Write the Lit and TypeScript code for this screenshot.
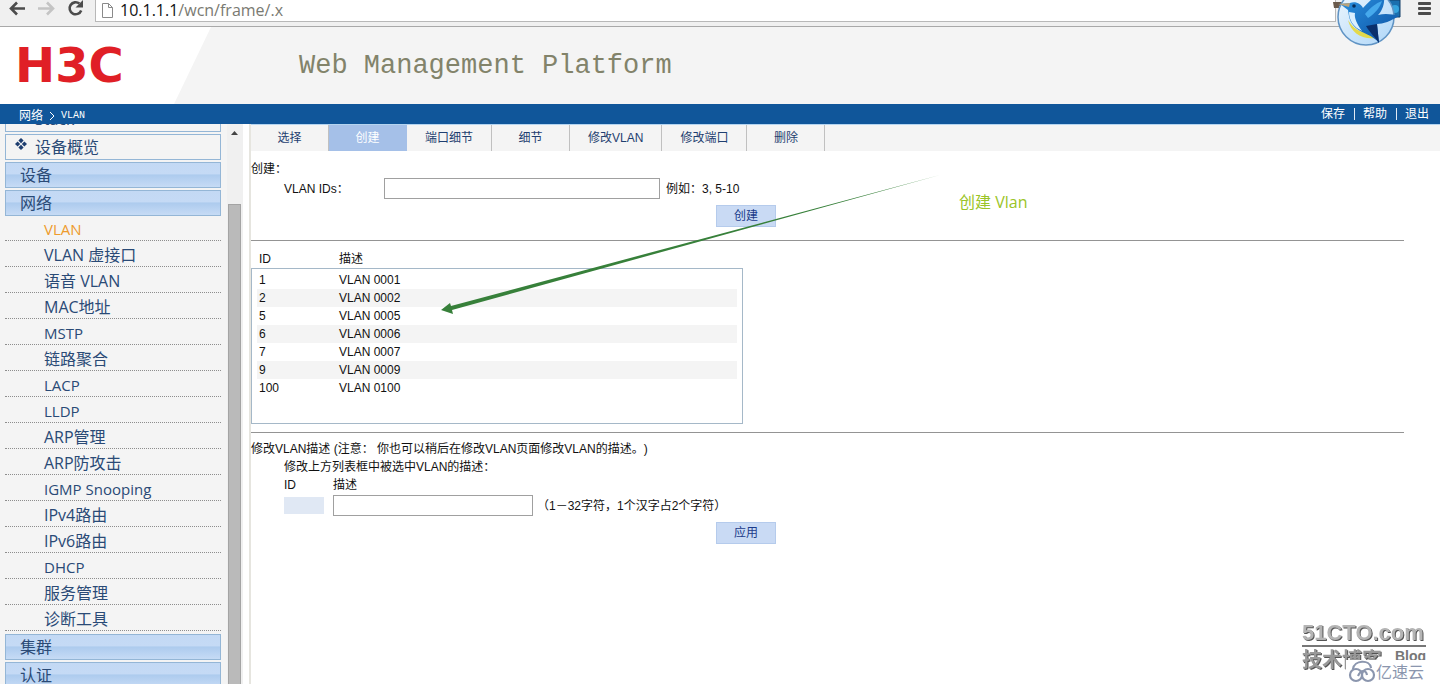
import { LitElement, html, css, svg } from "lit";
import { customElement, property, state } from "lit/decorators.js";
import { classMap } from "lit/directives/class-map.js";

@customElement("browser-bar")
class BrowserBar extends LitElement {
  static styles = css`
    :host {
      display: flex;
      align-items: flex-start;
      height: 26px;
      border-bottom: 1px solid #a9a9a9;
      background: #f0f0f0;
      overflow: hidden;
    }
    .tools {
      display: flex;
      flex: none;
      gap: 10px;
      width: 95px;
      padding-left: 8px;
      box-sizing: border-box;
    }
    .tool {
      display: block;
      padding: 0;
      border: 0;
      background: none;
      height: 20px;
      width: 19px;
    }
    svg {
      display: block;
    }
    .address {
      flex: 1;
      display: flex;
      gap: 6px;
      align-items: center;
      height: 22px;
      padding-left: 5px;
      border: 1px solid #b8b8b8;
      border-top: 0;
      background: #fff;
      font: 16px/18px "Open Sans", "Noto Sans", sans-serif;
      color: #7a7a72;
      box-sizing: border-box;
    }
    .url {
      height: 20px;
    }
    .host {
      color: #111;
    }
    .right {
      width: 104px;
      display: flex;
      justify-content: flex-end;
      padding-right: 8px;
      box-sizing: border-box;
    }
  `;
  render() {
    return html`
      <div class="tools">
        <button class="tool" aria-label="后退">
          <svg width="19" height="20" viewBox="0 0 19 20" fill="none" stroke="#4c4c4c" stroke-width="2.6">
            <path d="M17 8.500H4M9 2.500L3 8.500l6 6" />
          </svg>
        </button>
        <button class="tool" aria-label="前进">
          <svg width="19" height="20" viewBox="0 0 19 20" fill="none" stroke="#c4c4c4" stroke-width="2.6">
            <path d="M1 8.500h14M10 2.500l6 6l-6 6" />
          </svg>
        </button>
        <button class="tool" aria-label="刷新">
          <svg width="19" height="20" viewBox="0 0 19 20">
            <path d="M13.4 3.6A6 6 0 1 0 15.2 10.500" fill="none" stroke="#4c4c4c" stroke-width="2.6" />
            <path d="M17 0v7.500h-7.500z" fill="#4c4c4c" />
          </svg>
        </button>
      </div>
      <div class="address">
        <svg width="13" height="18" viewBox="0 0 13 18" fill="#fff" stroke="#8a8a8a">
          <path d="M1.500 1.500h6l4 4v10h-10zM7.500 1.500v4h4" />
        </svg>
        <span class="url"><span class="host">10.1.1.1</span>/wcn/frame/.x</span>
      </div>
      <div class="right">
        <button class="tool" aria-label="菜单">
          <svg width="19" height="20" viewBox="0 0 19 20" fill="#4a4a4a">
            <rect x="5" y="2" width="13" height="3" rx="1" />
            <rect x="5" y="7" width="13" height="3" rx="1" />
            <rect x="5" y="12" width="13" height="3" rx="1" />
          </svg>
        </button>
      </div>
    `;
  }
}

@customElement("side-menu")
class SideMenu extends LitElement {
  static styles = css`
    :host {
      display: flex;
      width: 243px;
      flex: none;
      background: #f4f4f4;
      overflow: hidden;
      font: 16px/24px "Open Sans", "Noto Sans CJK SC", sans-serif;
    }
    nav {
      flex: 1;
      margin-top: -18px;
      padding: 0 6px 0 5px;
    }
    a {
      color: #2a4a76;
      text-decoration: none;
    }
    .box {
      display: flex;
      align-items: center;
      height: 26px;
      margin-bottom: 2px;
      padding-left: 14px;
      border: 1px solid #94b6d6;
      box-sizing: border-box;
    }
    .group {
      background: linear-gradient(#c3d9f4, #c5daf5 45%, #adcbee 50%, #c6dbf5);
    }
    .page {
      padding-left: 9px;
      gap: 8px;
    }
    ul {
      list-style: none;
      margin: -3px 0 3px;
      padding: 0;
    }
    li {
      height: 26px;
      padding: 2px 0 0 39px;
      border-bottom: 1px dotted #8d8d8d;
      box-sizing: border-box;
    }
    .latin {
      font-size: 15px;
    }
    .current {
      color: #ee9b2d;
    }
    .scroll {
      width: 16px;
      background: #f0f0f0;
      display: flex;
      flex-direction: column;
      padding: 0 2px 0 1px;
      box-sizing: border-box;
    }
    .up {
      height: 80px;
      padding-top: 6px;
      box-sizing: border-box;
    }
    .thumb {
      flex: 1;
      background: #bababa;
      border: 1px solid #a4a4a4;
      border-bottom: 0;
    }
    svg {
      display: block;
    }
  `;
  items = ["VLAN", "VLAN 虚接口", "语音 VLAN", "MAC地址", "MSTP", "链路聚合", "LACP", "LLDP", "ARP管理",
    "ARP防攻击", "IGMP Snooping", "IPv4路由", "IPv6路由", "DHCP", "服务管理", "诊断工具"];

  page(label: string) {
    return html`<a class="box page" href="#">
      <svg width="12" height="18" viewBox="0 0 12 18" fill="#1f3f70">
        <path d="M6 0l2.600 2.600L6 5.200L3.400 2.600zM6 6.800l2.600 2.600L6 12L3.400 9.400zM2.600 3.400L5.200 6L2.600 8.600L0 6zM9.400 3.400L12 6L9.400 8.600L6.800 6z" />
      </svg>
      <span>${label}</span>
    </a>`;
  }
  item(label: string, i: number) {
    const classes = { current: i === 0, latin: /^[A-Za-z ]+$/.test(label) };
    return html`<li><a class=${classMap(classes)} href="#">${label}</a></li>`;
  }
  render() {
    return html`
      <nav>
        ${this.page("Stack")} ${this.page("设备概览")}
        <a class="box group" href="#">设备</a>
        <a class="box group" href="#">网络</a>
        <ul>
          ${this.items.map((t, i) => this.item(t, i))}
        </ul>
        <a class="box group" href="#">集群</a>
        <a class="box group" href="#">认证</a>
      </nav>
      <div class="scroll">
        <div class="up">
          <svg width="13" height="6" viewBox="0 0 13 6"><path d="M3 5L6.500 1L10 5z" fill="#444" /></svg>
        </div>
        <div class="thumb"></div>
      </div>
    `;
  }
}

@customElement("vlan-form")
class VlanForm extends LitElement {
  static styles = css`
    :host {
      display: block;
      flex: 1;
      min-width: 0;
      margin-left: 6px;
      border-left: 2px solid #e6e5df;
      background: #fff;
      color: #111;
      font: 12px/18px "Liberation Sans", "Noto Sans CJK SC", sans-serif;
      text-spacing-trim: space-all;
    }
    .tabs {
      display: flex;
      height: 27px;
      border-top: 1px solid #b4d4f0;
      background: #f4f4f4;
      box-sizing: border-box;
    }
    .tab {
      min-width: 78px;
      padding: 0 18px;
      border: 0;
      border-right: 1px solid #c0c0c0;
      background: none;
      color: #1f3f70;
      font: inherit;
      box-sizing: border-box;
    }
    .tab.active {
      background: #a5c0e8;
      border-color: #a5c0e8;
      color: #fff;
    }
    .body {
      padding-top: 9px;
      padding-right: 36px;
    }
    .row {
      display: flex;
      align-items: center;
      padding-left: 33px;
    }
    .name {
      width: 100px;
    }
    input {
      height: 21px;
      border: 1px solid #a0a0a0;
      padding: 0 4px;
      background: #fff;
      font: inherit;
      box-sizing: border-box;
    }
    .ids {
      width: 276px;
      margin-right: 6px;
    }
    .actions {
      display: flex;
      padding: 6px 0 0 465px;
    }
    .action {
      width: 60px;
      height: 22px;
      padding: 0;
      border: 1px solid #b5cbec;
      background: #c9daf4;
      color: #1b3a8a;
      font: inherit;
    }
    hr {
      height: 1px;
      margin: 13px 0 0;
      border: 0;
      background: #949494;
    }
    table {
      display: block;
      width: 492px;
      padding-top: 9px;
    }
    thead,
    tbody {
      display: block;
    }
    tr {
      display: grid;
      grid-template-columns: 80px 1fr;
    }
    th,
    td {
      padding: 0;
      text-align: left;
      font-weight: 400;
    }
    thead {
      padding: 0 8px;
    }
    tbody {
      height: 156px;
      padding: 2px 5px;
      border: 1px solid #a5b8c8;
      box-sizing: border-box;
    }
    tbody tr {
      padding-left: 2px;
    }
    tbody tr:nth-child(even) {
      background: #f4f4f4;
    }
    .list-end {
      margin-top: 8px;
      margin-bottom: 7px;
    }
    .col-id {
      width: 49px;
    }
    .fields {
      margin-top: 1px;
    }
    .picked {
      width: 40px;
      height: 17px;
      border: 0;
      margin-right: 9px;
      background: #e0e8f4;
    }
    .desc {
      width: 200px;
      margin-right: 4px;
    }
  `;
  @state() active = 1;
  tabs = ["选择", "创建", "端口细节", "细节", "修改VLAN", "修改端口", "删除"];
  @property({ attribute: false }) vlans = [
    ["1", "VLAN 0001"],
    ["2", "VLAN 0002"],
    ["5", "VLAN 0005"],
    ["6", "VLAN 0006"],
    ["7", "VLAN 0007"],
    ["9", "VLAN 0009"],
    ["100", "VLAN 0100"],
  ];
  render() {
    return html`
      <div class="tabs">
        ${this.tabs.map(
          (t, i) =>
            html`<button class=${classMap({ tab: true, active: i === this.active })} @click=${() => (this.active = i)}>${t}</button>`
        )}
      </div>
      <div class="body">
        <div>创建：</div>
        <div class="row">
          <label class="name" for="ids">VLAN IDs：</label>
          <input class="ids" id="ids" type="text" />
          <span>例如：3, 5-10</span>
        </div>
        <div class="actions"><button class="action">创建</button></div>
        <hr />
        <table>
          <thead><tr><th>ID</th><th>描述</th></tr></thead>
          <tbody>${this.vlans.map(([id, name]) => html`<tr><td>${id}</td><td>${name}</td></tr>`)}</tbody>
        </table>
        <hr class="list-end" />
        <div>修改VLAN描述 (注意： 你也可以稍后在修改VLAN页面修改VLAN的描述。)</div>
        <div class="row">修改上方列表框中被选中VLAN的描述：</div>
        <div class="row">
          <label class="col-id" for="picked">ID</label>
          <label for="desc">描述</label>
        </div>
        <div class="row fields">
          <input class="picked" id="picked" type="text" readonly />
          <input class="desc" id="desc" type="text" />
          <span>（1－32字符，1个汉字占2个字符）</span>
        </div>
        <div class="actions"><button class="action">应用</button></div>
      </div>
    `;
  }
}

@customElement("app-root")
class AppRoot extends LitElement {
  static styles = css`
    :host {
      display: flex;
      flex-direction: column;
      position: relative;
      height: 100vh;
      overflow: hidden;
      background: #fff;
    }
    header {
      display: flex;
      align-items: center;
      flex: none;
      height: 77px;
      background: #f4f4f4;
    }
    .brand {
      width: 211px;
      height: 77px;
      margin-right: 88px;
      padding-left: 15px;
      box-sizing: border-box;
      background: #fff;
      clip-path: polygon(0 0, 100% 0, 174px 100%, 0 100%);
      color: #e01f26;
      font: bold 48px/77px "DejaVu Sans", sans-serif;
    }
    h1 {
      margin: 0;
      color: #82836a;
      font: 27px/32px "Liberation Mono", monospace;
    }
    .crumbs {
      display: flex;
      align-items: center;
      justify-content: space-between;
      flex: none;
      height: 20px;
      padding: 0 11px 0 19px;
      background: #10569a;
      color: #fff;
      font: 12px/20px "Liberation Sans", "Noto Sans CJK SC", sans-serif;
    }
    .path,
    .links {
      display: flex;
      align-items: center;
      gap: 6px;
    }
    .path {
      padding-top: 3px;
    }
    .links {
      gap: 8px;
    }
    .crumbs a {
      color: #fff;
      text-decoration: none;
    }
    .mono {
      font: 10px/20px "Liberation Mono", monospace;
    }
    .sep {
      width: 1px;
      height: 12px;
      margin-left: 1px;
      background: #dfe9f4;
    }
    .main {
      display: flex;
      flex: 1;
      min-height: 0;
    }
    .bird,
    .arrow,
    .note,
    .mark {
      position: absolute;
      pointer-events: none;
    }
    .bird {
      top: 0;
      right: 36px;
    }
    .arrow {
      left: 438px;
      top: 172px;
    }
    .note {
      left: 959px;
      top: 190px;
      color: #9ac427;
      font: 16px/24px "Open Sans", "Noto Sans CJK SC", sans-serif;
    }
    .mark {
      right: 10px;
      bottom: 0;
    }
    .raised {
      filter: drop-shadow(1px 1px 0 #555);
    }
    .cto {
      font: bold 22px "Liberation Sans", sans-serif;
    }
    .sub {
      font: bold 20px "Noto Sans CJK SC", sans-serif;
    }
    .blog {
      font: bold 14px "Liberation Sans", sans-serif;
    }
    .cloud {
      font: 16px "Noto Sans CJK SC", sans-serif;
    }
  `;

  bird() {
    return svg`<svg class="bird" width="72" height="50" viewBox="0 0 72 50">
      <defs>
        <linearGradient id="disc" x1="0" y1="0" x2="1" y2="1">
          <stop offset="0" stop-color="#eef7fe" /><stop offset="1" stop-color="#aed6f8" />
        </linearGradient>
        <linearGradient id="wing" x1="0" y1="0" x2="1" y2="1">
          <stop offset="0" stop-color="#2b93e2" /><stop offset="1" stop-color="#0b4fa0" />
        </linearGradient>
      </defs>
      <path d="M48 0h20v17h-10z" fill="#1b6fae" stroke="#123f68" />
      <circle cx="63" cy="9" r="4" fill="#35a3dd" />
      <path d="M1 2h13v4H7v2H2z" fill="#6a5a4c" />
      <circle cx="34" cy="17" r="28" fill="url(#disc)" stroke="#5f93c4" stroke-width="1.500" />
      <path d="M16 20C19 33 30 40 44 38L37 33C28 33 21 28 16 20z" fill="#e3d94b" />
      <path d="M8 4L18 3C24 1 29 4 31 8C35 4 40 -2 45 -4H52C53 4 50 11 46 15C53 13 60 14 67 16C59 21 51 24 45 24L47 43C41 35 31 34 24 28C17 22 17 16 16 10z" fill="url(#wing)" />
      <path d="M6 4L18 3L17 7z" fill="#b9a37b" />
      <path d="M34 26L45 24L47 43C43 37 38 33 34 26z" fill="#0a2f6b" />
      <path d="M17 12C17 20 21 27 30 31C25 24 22 18 23 13z" fill="#d9efff" />
      <path d="M33 14C38 8 44 3 50 1C48 8 42 14 36 18z" fill="#46a9ec" />
      <circle cx="22" cy="6" r="1.800" fill="#072d5c" />
    </svg>`;
  }

  watermark() {
    return svg`<svg class="mark" width="130" height="70" viewBox="0 0 130 70">
      <text class="cto raised" x="2" y="26" fill="#b4b4b4">51CTO.com</text>
      <rect x="2" y="31" width="124" height="2" fill="#777" />
      <text class="sub raised" x="2" y="53" fill="#999">技术博客</text>
      <text class="blog" x="95" y="47" fill="#777">Blog</text>
      <path d="M46 46h84v24H46z" fill="#fff" />
      <g fill="none" stroke="#8b96ae" stroke-width="2.200">
        <circle cx="56" cy="61" r="6" />
        <circle cx="68" cy="61" r="6" />
        <path d="M53 55C54 46 70 45 71 54M58 62C61 55 66 56 67 61" />
      </g>
      <text class="cloud" x="76" y="64" fill="#8b96ae">亿速云</text>
    </svg>`;
  }

  render() {
    return html`
      <browser-bar></browser-bar>
      <header>
        <div class="brand">H3C</div>
        <h1>Web Management Platform</h1>
      </header>
      <div class="crumbs">
        <div class="path">
          <span>网络</span>
          <svg width="6" height="10" viewBox="0 0 6 10" fill="none" stroke="#fff"><path d="M1 1l4 4l-4 4" /></svg>
          <span class="mono">VLAN</span>
        </div>
        <div class="links">
          <a href="#">保存</a><span class="sep"></span><a href="#">帮助</a><span class="sep"></span><a href="#">退出</a>
        </div>
      </div>
      <div class="main">
        <side-menu></side-menu>
        <vlan-form></vlan-form>
      </div>
      ${this.bird()}
      <svg class="arrow" width="504" height="146" viewBox="0 0 504 146">
        <path d="M502 3L13 134L12 131L3 138L15 142L14 138z" fill="#37803a" />
      </svg>
      <div class="note">创建 Vlan</div>
      ${this.watermark()}
    `;
  }
}
